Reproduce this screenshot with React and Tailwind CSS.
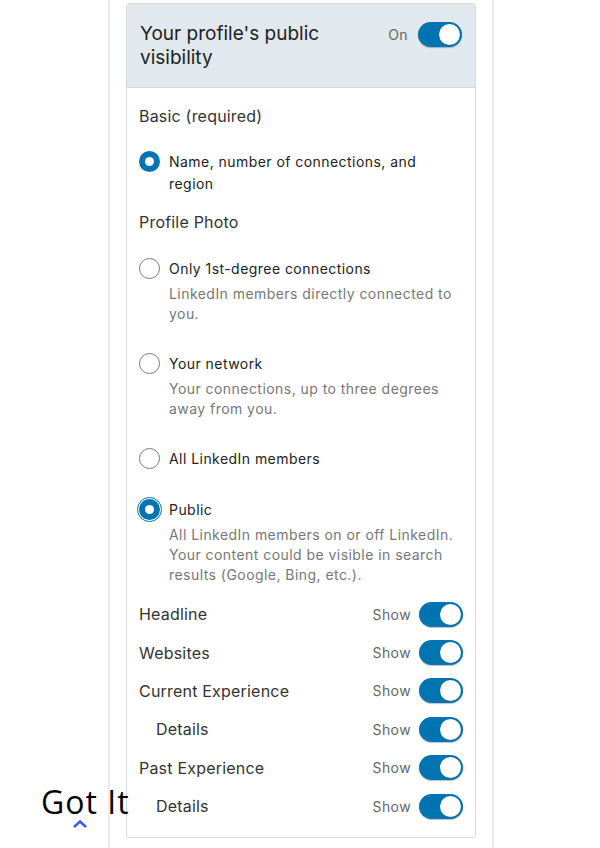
import React from "react";

const font = { fontFamily: "Inter, 'Noto Sans', sans-serif" };

function Toggle() {
  return (
    <div className="w-[44px] h-[25px] rounded-full bg-[#0073b1] flex items-center justify-end pr-[2px] shadow-[0_1px_1px_rgba(0,0,0,0.25)]">
      <div className="w-[21px] h-[21px] rounded-full bg-white shadow-[0_0_1px_rgba(0,0,0,0.3)]" />
    </div>
  );
}

function Radio({ checked, focus }) {
  if (checked) {
    return (
      <div
        className={
          "w-[21px] h-[21px] rounded-full bg-[#0073b1] flex items-center justify-center shrink-0 " +
          (focus ? "ring-2 ring-white outline outline-1 outline-offset-[1px] outline-[#0073b1]" : "")
        }
      >
        <div className="w-[9px] h-[9px] rounded-full bg-white" />
      </div>
    );
  }
  return <div className="w-[21px] h-[21px] rounded-full border border-[#777] bg-white shrink-0" />;
}

function Option({ label, desc, checked, focus, className = "" }) {
  return (
    <div className={"flex gap-[9px] " + className}>
      <div>
        <Radio checked={checked} focus={focus} />
      </div>
      <div className="tracking-[0.45px]">
        <div className="text-[14px] leading-[22px] text-[#222]">{label}</div>
        {desc && (
          <div className="text-[14px] leading-[20px] text-[#777] mt-[4px]">{desc}</div>
        )}
      </div>
    </div>
  );
}

function ShowRow({ label, indent }) {
  return (
    <div className="flex items-center justify-between h-[38.4px]">
      <span className={"text-[16px] text-[#333] tracking-[0.2px] " + (indent ? "pl-[17px]" : "")}>{label}</span>
      <div className="flex items-center gap-[8px]">
        <span className="text-[14px] text-[#666] tracking-[0.4px]">Show</span>
        <Toggle />
      </div>
    </div>
  );
}

export default function App() {
  return (
    <div className="relative w-[600px] h-[848px] overflow-hidden bg-white" style={font}>
      <div className="ml-[108px] w-[386px] h-full border-x-2 border-[#ececec] px-[16px] pt-[3px]">
        <div className="border border-[#dadada] rounded-[3px] overflow-hidden">
          <div className="bg-[#e1e9ee] border-b border-[#d0d8dc] px-[13px] pt-[18px] pb-[17px] flex justify-between">
            <h2 className="text-[19px] leading-[24px] text-[#222] w-[200px]">
              Your profile's public visibility
            </h2>
            <div className="flex items-center gap-[10px] h-[24px] self-start">
              <span className="text-[14px] text-[#666] tracking-[0.4px]">On</span>
              <Toggle />
            </div>
          </div>
          <div className="px-[12px] pt-[16px] pb-[12px]">
            <div className="text-[16px] leading-[24px] text-[#333] tracking-[0.2px]">Basic (required)</div>
            <Option className="mt-[23px]" checked label={<>Name, number of connections, and<br />region</>} />
            <div className="text-[16px] leading-[24px] text-[#333] mt-[15px] tracking-[0.2px]">Profile Photo</div>
            <Option
              className="mt-[24px]"
              label="Only 1st-degree connections"
              desc="LinkedIn members directly connected to you."
            />
            <Option
              className="mt-[29px]"
              label="Your network"
              desc="Your connections, up to three degrees away from you."
            />
            <Option className="mt-[29px]" label="All LinkedIn members" />
            <Option
              className="mt-[29px]"
              checked
              focus
              label="Public"
              desc="All LinkedIn members on or off LinkedIn. Your content could be visible in search results (Google, Bing, etc.)."
            />
            <div className="mt-[10px]">
              <ShowRow label="Headline" />
              <ShowRow label="Websites" />
              <ShowRow label="Current Experience" />
              <ShowRow label="Details" indent />
              <ShowRow label="Past Experience" />
              <ShowRow label="Details" indent />
            </div>
          </div>
        </div>
      </div>
      <div className="absolute left-[41px] top-[783px] flex flex-col items-center">
        <span
          className="text-[32px] leading-[38px] text-black tracking-[1px]"
          style={{ fontFamily: "'Open Sans', sans-serif" }}
        >
          Got It
        </span>
        <svg width="16" height="10" viewBox="0 0 16 10" className="-mt-[2px] -ml-[10px]">
          <path d="M2 8 L8 2.5 L14 8" stroke="#3b5bfb" strokeWidth="2.5" fill="none" />
        </svg>
      </div>
    </div>
  );
}
